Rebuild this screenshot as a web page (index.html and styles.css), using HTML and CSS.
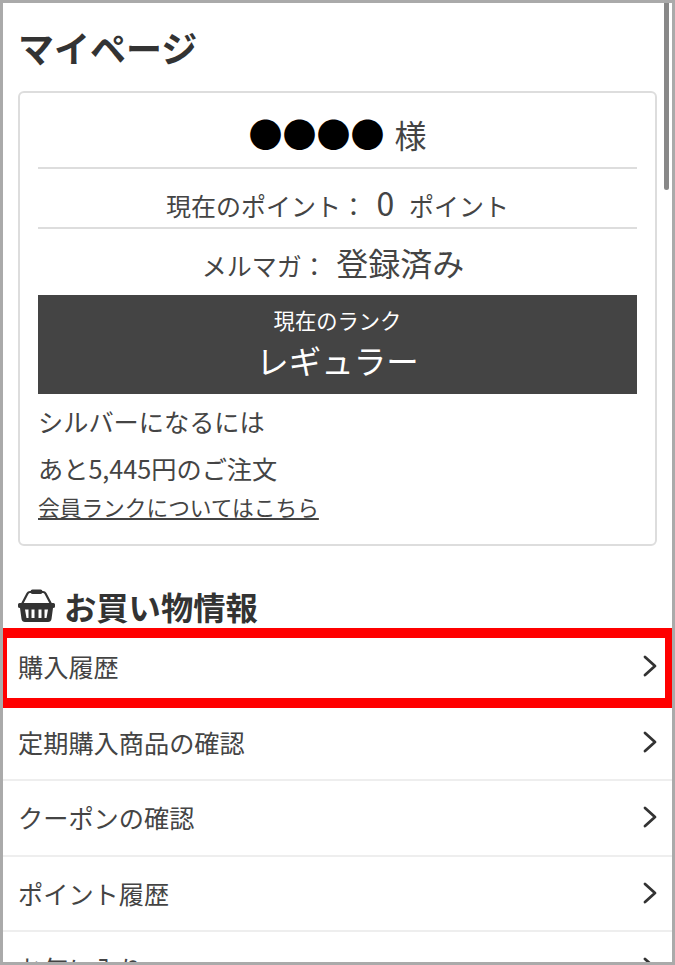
FILE: index.html
```html
<!DOCTYPE html>
<html lang="ja">
<head>
  <meta charset="UTF-8" />
  <meta name="viewport" content="width=device-width, initial-scale=1.0"/>
  <title>マイページ</title>
  <link rel="stylesheet" href="styles.css">
</head>
<body>
  <div class="frame">
    <div class="scroll-thumb"></div>
    <h1 class="page-title">マイページ</h1>

    <div class="member-card">
      <div class="member-name"><span class="dots">●●●●</span> 様</div>
      <div class="member-points">現在のポイント： <span class="big point-value">0</span> ポイント</div>
      <div class="member-mail">メルマガ： <span class="big mail-value">登録済み</span></div>
      <div class="rank-box">
        <div class="rank-label">現在のランク</div>
        <div class="rank-name">レギュラー</div>
      </div>
      <p class="rank-note">シルバーになるには</p>
      <p class="rank-note">あと5,445円のご注文</p>
      <a class="rank-link" href="#">会員ランクについてはこちら</a>
    </div>

    <h2 class="section-title">
      <svg class="basket" viewBox="0 0 37 33" width="37" height="33">
        <path d="M4 15 L9.500 4.500 Q10.300 3 12 3 H25 Q26.700 3 27.500 4.500 L33 15" fill="none" stroke="#333" stroke-width="2.200"/>
        <rect x="12.500" y="0.500" width="12" height="4.500" rx="2" fill="#333"/>
        <path fill-rule="evenodd" fill="#333" d="M1.500 14 H35.500 Q37 14 37 15.500 V17.500 Q37 19 35 19 L33.500 30 Q33 33 30 33 H7 Q4 33 3.500 30 L2 19 Q0 19 0 17.500 V15.500 Q0 14 1.500 14 Z M7 20.500 L8.500 29 H10.500 V20.500 Z M13.500 20.500 V29 H16.500 V20.500 Z M20.500 20.500 V29 H23.500 V20.500 Z M26.500 20.500 V29 H28.500 L30 20.500 Z"/>
      </svg>
      お買い物情報
    </h2>

    <ul class="menu">
      <li class="menu-row is-marked"><span>購入履歴</span><svg class="chevron" viewBox="0 0 14 22" width="14" height="22"><path d="M2 2 L12 11 L2 20" fill="none" stroke="#333" stroke-width="2.800" stroke-linecap="round" stroke-linejoin="round"/></svg></li>
      <li class="menu-row"><span>定期購入商品の確認</span><svg class="chevron" viewBox="0 0 14 22" width="14" height="22"><path d="M2 2 L12 11 L2 20" fill="none" stroke="#333" stroke-width="2.800" stroke-linecap="round" stroke-linejoin="round"/></svg></li>
      <li class="menu-row"><span>クーポンの確認</span><svg class="chevron" viewBox="0 0 14 22" width="14" height="22"><path d="M2 2 L12 11 L2 20" fill="none" stroke="#333" stroke-width="2.800" stroke-linecap="round" stroke-linejoin="round"/></svg></li>
      <li class="menu-row"><span>ポイント履歴</span><svg class="chevron" viewBox="0 0 14 22" width="14" height="22"><path d="M2 2 L12 11 L2 20" fill="none" stroke="#333" stroke-width="2.800" stroke-linecap="round" stroke-linejoin="round"/></svg></li>
      <li class="menu-row"><span>お気に入り</span><svg class="chevron" viewBox="0 0 14 22" width="14" height="22"><path d="M2 2 L12 11 L2 20" fill="none" stroke="#333" stroke-width="2.800" stroke-linecap="round" stroke-linejoin="round"/></svg></li>
    </ul>
  </div>
</body>
</html>
```

FILE: styles.css
```css
* {
  box-sizing: border-box;
}

html, body {
  margin: 0;
  padding: 0;
  overflow: hidden;
}

body {
  font-family: "Noto Sans CJK JP", "Noto Sans", sans-serif;
  color: #444;
  background: #fff;
}

.frame {
  position: relative;
  height: 965px;
  border: 3px solid #aaa;
  overflow: hidden;
}

.scroll-thumb {
  position: absolute;
  top: 0;
  right: 3px;
  width: 5px;
  height: 187px;
  background: #888;
  border-radius: 0 0 3px 3px;
}

.page-title {
  margin: 0;
  padding: 19px 0 0 15px;
  height: 88px;
  font-size: 36px;
  line-height: 50px;
  font-weight: 700;
  color: #333;
}

.member-card {
  margin: 0 15px;
  height: 455px;
  padding: 0 18px;
  border: 2px solid #ddd;
  border-radius: 6px;
}

.member-name {
  height: 76px;
  padding-top: 17px;
  text-align: center;
  font-size: 32px;
  line-height: 48px;
  border-bottom: 2px solid #ddd;
}

.dots {
  margin-right: 3px;
  color: #000;
  font-size: 34px;
}

.member-points {
  height: 60px;
  padding-top: 12px;
  text-align: center;
  font-size: 25px;
  line-height: 42px;
  border-bottom: 2px solid #ddd;
}

.member-mail {
  height: 66px;
  padding-top: 9px;
  text-align: center;
  font-size: 25px;
  line-height: 48px;
}

.big {
  font-size: 32px;
}

.point-value {
  margin: 0 9px 0 5px;
}

.mail-value {
  margin: 0 9px 0 4px;
}

.rank-box {
  height: 99px;
  padding-top: 10px;
  text-align: center;
  color: #fff;
  background: #444;
}

.rank-label {
  font-size: 21.300px;
  line-height: 30px;
}

.rank-name {
  font-size: 32.500px;
  line-height: 50px;
}

.rank-note {
  margin: 0;
  height: 47px;
  padding-top: 7px;
  font-size: 25.200px;
  line-height: 40px;
}

.rank-link {
  display: block;
  margin-top: 3px;
  font-size: 21.700px;
  line-height: 32px;
  color: #444;
}

.section-title {
  display: flex;
  align-items: center;
  gap: 9px;
  margin: 0;
  padding: 35px 0 0 15px;
  height: 84px;
  font-size: 32.300px;
  line-height: 46px;
  font-weight: 700;
  color: #333;
}

.basket {
  flex: none;
}

.menu {
  margin: 0;
  padding: 0;
  list-style: none;
}

.menu-row {
  position: relative;
  display: flex;
  align-items: center;
  justify-content: space-between;
  height: 75.500px;
  padding: 0 15px 1px 15px;
  font-size: 25.200px;
  border-bottom: 2px solid #eee;
}

.menu-row.is-marked {
  padding-bottom: 3px;
  border-bottom: none;
}

.menu-row.is-marked::after {
  content: "";
  position: absolute;
  top: -2px;
  left: 0;
  right: 0;
  bottom: -2.500px;
  border: solid #f00;
  border-width: 10px 7px 10px 4px;
}
```
